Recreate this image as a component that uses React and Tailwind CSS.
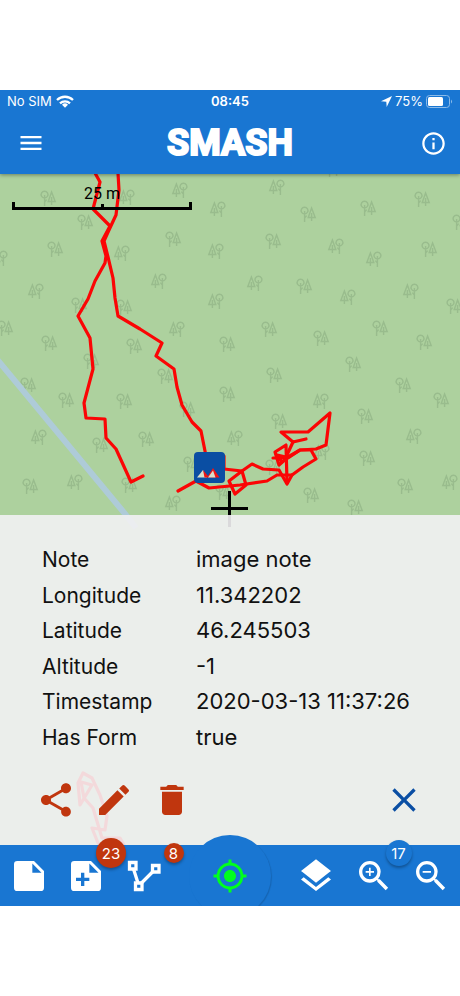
import React from "react";
import {
  MdClose,
  MdDelete,
  MdEdit,
  MdInfoOutline,
  MdLayers,
  MdMenu,
  MdMyLocation,
  MdShare,
  MdZoomIn,
  MdZoomOut,
} from "react-icons/md";

// Tree pairs with the broad-leaved tree on the left.
const LEAF_FIRST = [
  [48, 198], [85, 222], [55, 249], [173, 239], [79, 305], [124, 307], [5, 328],
  [49, 343], [134, 346], [227, 344], [308, 214], [368, 208], [422, 199], [460, 222],
  [273, 241], [429, 249], [304, 286], [454, 306], [269, 329], [321, 338], [380, 328],
  [424, 342], [333, 169], [91, 361], [28, 385], [165, 376], [66, 400], [124, 401],
  [187, 409], [227, 394], [100, 445], [146, 439], [30, 486], [129, 485], [191, 464],
  [223, 492], [353, 364], [274, 375], [403, 385], [441, 400], [365, 416], [279, 421],
  [273, 467], [367, 458], [405, 486], [311, 495], [355, 507],
];

// Tree pairs with the pine on the left.
const PINE_FIRST = [
  [180, 190], [218, 209], [127, 197], [122, 253], [216, 251], [0, 258], [159, 281],
  [36, 291], [216, 301], [177, 329], [277, 187], [336, 246], [374, 259], [255, 283],
  [348, 297], [411, 291], [39, 437], [75, 482], [173, 503], [321, 401], [235, 438],
  [414, 436], [322, 452], [450, 482],
];

const TRACKS = [
  "95,173 100,182 93,209 103,219 110,226 102,241 106,256 105,263 95,281 88,299 78,316 90,338 93,369 84,403 86,418 105,419 106,438 116,449 131,482 143,476",
  "118,173 119,190 116,215 109,230 104,241 108,257 113,278 115,298 118,316 140,329 162,343 156,356 174,369 177,387 182,405 192,422 201,431 206,456",
  "178,491 196,481 209,488 240,485 267,481 277,475 292,475 303,467 316,459 311,450 300,450 288,458 273,458",
  "224,456 224,469 242,471 252,464 263,469 279,470 287,484 292,475",
  "242,471 229,481 235,494 246,485 242,471",
  "306,439 293,442 281,432 308,432 330,413 326,445 316,449 300,450 288,457 279,465 275,452 286,445 287,482",
  "293,442 286,457 277,455 282,462",
  "98,843 92,828 105,830 107,816 100,795 92,778 83,773 78,783 80,805 92,785 81,782 84,798 93,808 102,838 120,838 124,845",
];

const DETAILS = [
  ["Note", "image note"],
  ["Longitude", "11.342202"],
  ["Latitude", "46.245503"],
  ["Altitude", "-1"],
  ["Timestamp", "2020-03-13 11:37:26"],
  ["Has Form", "true"],
];

function Trees({ x, y, flip }) {
  return (
    <g transform={`translate(${x} ${y}) scale(${flip ? -1 : 1} 1)`}>
      <path d="M-3.500 0a3.400 3.400 0 1 1 .1 0M-3.400-3V8M-3.400 4l2-2.400M3.600-6 .2 3.500h7L3.600-6ZM3.600-1v8" />
    </g>
  );
}

function MapCanvas() {
  return (
    <svg
      className="absolute inset-0 h-full w-full"
      viewBox="0 174 460 671"
      preserveAspectRatio="xMidYMin slice"
      aria-hidden="true"
    >
      <rect x="0" y="174" width="460" height="671" fill="#add19e" />
      <g fill="none" stroke="#99bc8d" strokeWidth="1.400">
        {LEAF_FIRST.map(([x, y]) => (
          <Trees key={`${x}-${y}`} x={x} y={y} />
        ))}
        {PINE_FIRST.map(([x, y]) => (
          <Trees key={`${x}-${y}`} x={x} y={y} flip />
        ))}
      </g>
      <path d="M-4 358 126 515 136 528" fill="none" stroke="#aecbd8" strokeWidth="6" />
      <g fill="none" stroke="#fb0505" strokeWidth="3.200" strokeLinejoin="round" strokeLinecap="round">
        {TRACKS.map((points) => (
          <polyline key={points} points={points} />
        ))}
      </g>
      <rect x="194" y="452" width="31" height="31" rx="4" fill="#0a4ea3" />
      <path d="M197 477.500 203 470 207 477.500Z" fill="#d9dfcb" />
      <path d="M203 470 208 476 213 468 219.500 477.500H204.500Z" fill="#f01414" />
      <path d="M208 477.500 213 470.500 215.500 477.500Z" fill="#d9dfcb" />
      <path d="M211 508.500H248M229.500 491V527" stroke="#000" strokeWidth="3" />
    </svg>
  );
}

function NoteIcon({ plus }) {
  return (
    <svg viewBox="0 0 24 24" className="size-10" fill="currentColor" fillRule="evenodd" aria-hidden="true">
      <path
        d={
          "M14 10h5.500L14 4.500V10ZM5 3h10l6 6v10a2 2 0 0 1-2 2H5a2 2 0 0 1-2-2V5a2 2 0 0 1 2-2Z" +
          (plus ? "M9 18h2v-3h3v-2h-3v-3H9v3H6v2h3v3Z" : "")
        }
      />
    </svg>
  );
}

function PolylineIcon() {
  return (
    <svg viewBox="0 0 40 40" className="size-10" fill="none" stroke="currentColor" strokeWidth="3.300" aria-hidden="true">
      <path d="M5.500 6.500h6.500v6.500H5.500ZM28.500 9.500H35V16h-6.500ZM11.500 27H18v6.500h-6.500Z" />
      <path d="M9.500 13 14 27M29 15.500 17 27.500" />
    </svg>
  );
}

function Badge({ children, className }) {
  return (
    <span
      className={`absolute flex items-center justify-center rounded-full text-[15px] leading-none text-white shadow-[0_2px_3px_rgba(0,0,0,0.3)] ${className}`}
    >
      {children}
    </span>
  );
}

function BarButton({ label, children }) {
  return (
    <button type="button" aria-label={label} className="relative flex h-full w-full items-center justify-center text-white">
      {children}
    </button>
  );
}

function StatusBar() {
  return (
    <div className="grid h-[22px] grid-cols-[1fr_auto_1fr] items-center px-[7px] text-[13px] leading-none">
      <div className="flex items-center gap-1">
        <span>No SIM</span>
        <svg viewBox="0 0 18 13" className="h-[13px] w-[18px]" fill="none" stroke="currentColor" strokeWidth="2.300" aria-hidden="true">
          <path d="M1 5a11.500 11.500 0 0 1 16 0M4 8.300a7.300 7.300 0 0 1 10 0" />
          <path d="M9 12.800 6 9.800a4.300 4.300 0 0 1 6 0Z" fill="currentColor" stroke="none" />
        </svg>
      </div>
      <span className="text-center font-semibold">08:45</span>
      <div className="flex items-center justify-end gap-[3px]">
        <svg viewBox="0 0 11 11" className="size-[11px]" fill="currentColor" aria-hidden="true">
          <path d="M11 0 0 5.300l5.300.4.400 5.300Z" />
        </svg>
        <span>75%</span>
        <svg viewBox="0 0 27 13" className="h-[13px] w-[27px]" aria-hidden="true">
          <rect x=".5" y=".5" width="23" height="12" rx="3" fill="none" stroke="#8cbbe9" />
          <rect x="2" y="2" width="15" height="9" rx="1.500" fill="#fff" />
          <path d="M25 4.500a2.500 2.500 0 0 1 0 4Z" fill="#8cbbe9" />
        </svg>
      </div>
    </div>
  );
}

export default function App() {
  return (
    <div className="min-h-screen bg-white py-[90px] font-['Inter',sans-serif]">
      <div className="overflow-hidden">
        <header className="relative z-10 bg-[#1976d2] text-white shadow-[0_1px_4px_rgba(0,0,0,0.4)]">
          <StatusBar />
          <div className="grid h-[62px] grid-cols-[1fr_auto_1fr] items-center px-[9px]">
            <button type="button" aria-label="Menu" className="flex h-9 w-11 items-center justify-center">
              <MdMenu className="size-7" />
            </button>
            <h1 className="font-['Roboto',sans-serif] text-4xl font-bold leading-none [-webkit-text-stroke:2px_white]">
              SMASH
            </h1>
            <button type="button" aria-label="Information" className="flex size-9 items-center justify-center justify-self-end">
              <MdInfoOutline className="size-[27px]" />
            </button>
          </div>
        </header>

        <main className="relative">
          <MapCanvas />
          <div className="relative h-[341px] px-3 pt-3">
            <div className="w-[180px] text-center font-['Roboto',sans-serif] text-base leading-4 text-black">
              25 m
              <div className="flex h-2 justify-center border-x-[3px] border-b-[3px] border-black">
                <span className="mt-[2px] h-[3px] w-[3px] bg-black" />
              </div>
            </div>
          </div>

          <section aria-label="Note details" className="relative bg-[#f2f1f3]/90 px-9 pb-[25px] pt-[30px]">
            <table className="h-[213px] w-full text-left text-[22px] leading-7 text-[#111]">
              <tbody>
                {DETAILS.map(([name, value]) => (
                  <tr key={name} className="align-baseline">
                    <th scope="row" className="w-40 p-0 pl-[6px] text-[21px] font-normal">{name}</th>
                    <td className="whitespace-nowrap p-0">{value}</td>
                  </tr>
                ))}
              </tbody>
            </table>
            <div className="mt-[22px] flex gap-[18px] text-[#c0360e]">
              <button type="button" aria-label="Share"><MdShare className="size-10" /></button>
              <button type="button" aria-label="Edit"><MdEdit className="size-10" /></button>
              <button type="button" aria-label="Delete"><MdDelete className="size-10" /></button>
              <button type="button" aria-label="Close" className="ml-auto text-[#0a4ea3]">
                <MdClose className="size-10" />
              </button>
            </div>
          </section>
        </main>

        <nav className="relative grid h-[61px] grid-cols-8 bg-[#1976d2]">
          <BarButton label="Add note"><NoteIcon /></BarButton>
          <BarButton label="Add form note">
            <NoteIcon plus />
            <Badge className="-right-[11px] -top-[7px] size-[30px] bg-[#c0360e]">23</Badge>
          </BarButton>
          <BarButton label="Log track">
            <PolylineIcon />
            <Badge className="-right-[11px] -top-[2px] size-5 bg-[#c0360e]">8</Badge>
          </BarButton>
          <div className="relative col-span-2 flex items-center justify-center">
            <button
              type="button"
              aria-label="Center on position"
              className="-my-3 flex size-[82px] items-center justify-center rounded-full bg-[#1976d2] text-[#00ff1e] shadow-[1px_1px_1px_rgba(0,0,0,0.14)]"
            >
              <MdMyLocation className="size-9" />
            </button>
          </div>
          <BarButton label="Layers"><MdLayers className="size-10" /></BarButton>
          <BarButton label="Zoom in">
            <MdZoomIn className="size-10" />
            <Badge className="-right-[9px] -top-[5px] size-[26px] bg-[#1976d2]">17</Badge>
          </BarButton>
          <BarButton label="Zoom out"><MdZoomOut className="size-10" /></BarButton>
        </nav>
      </div>
    </div>
  );
}
